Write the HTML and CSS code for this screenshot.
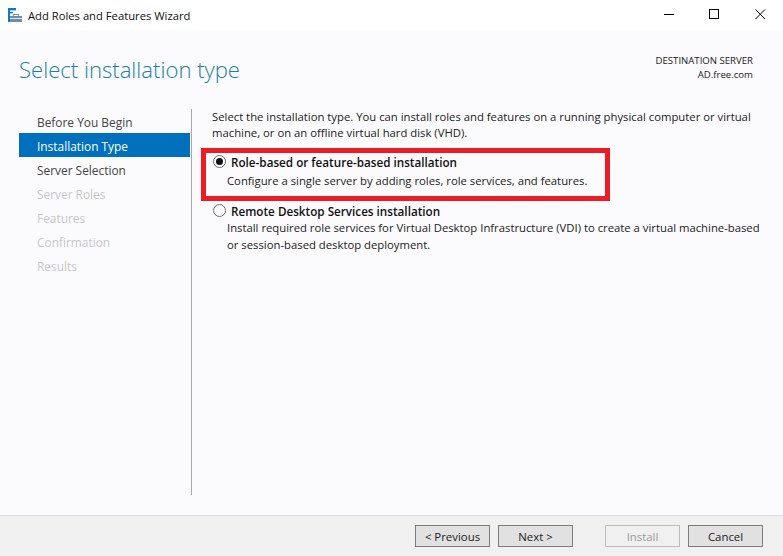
FILE: index.html
```html
<!DOCTYPE html>
<html lang="en">
<head>
<meta charset="utf-8">
<title>Add Roles and Features Wizard</title>
<link rel="stylesheet" href="styles.css">
</head>
<body>
<div class="window">
  <header class="titlebar">
    <svg class="app-icon" width="14" height="14" viewBox="0 0 14 14">
      <rect x="0" y="0" width="8" height="2.4" fill="#0f78c8"/>
      <rect x="0" y="0" width="2" height="14" fill="#0f78c8"/>
      <rect x="0" y="4" width="5" height="1.4" fill="#0f78c8"/>
      <rect x="5.5" y="6.5" width="5" height="2" fill="none" stroke="#6f8ea8" stroke-width="1"/>
      <rect x="2" y="8" width="12" height="6" fill="#6f8ea8"/>
      <rect x="2" y="10" width="12" height="1" fill="#dfe7ee"/>
    </svg>
    <span class="app-title">Add Roles and Features Wizard</span>
    <div class="win-controls">
      <svg width="11" height="11" viewBox="0 0 11 11"><path d="M1 5.5H11" stroke="#000" fill="none"/></svg>
      <svg width="11" height="11" viewBox="0 0 11 11"><rect x=".5" y=".5" width="9" height="9" stroke="#000" fill="none"/></svg>
      <svg width="11" height="11" viewBox="0 0 11 11"><path d="M.5 .5L10 10M10 .5L.5 10" stroke="#000" fill="none"/></svg>
    </div>
  </header>
  <div class="page-head">
    <h1 class="page-title">Select installation type</h1>
    <div class="dest">
      <div>DESTINATION SERVER</div>
      <div>AD.free.com</div>
    </div>
  </div>
  <main class="content">
    <nav class="steps">
      <div class="step">Before You Begin</div>
      <div class="step active">Installation Type</div>
      <div class="step">Server Selection</div>
      <div class="step off">Server Roles</div>
      <div class="step off">Features</div>
      <div class="step off">Confirmation</div>
      <div class="step off">Results</div>
    </nav>
    <section class="panel">
      <p class="intro">Select the installation type. You can install roles and features on a running physical computer or virtual machine, or on an offline virtual hard disk (VHD).</p>
      <div class="option first">
        <div class="opt-head"><span class="radio checked"></span><span class="opt-title">Role-based or feature-based installation</span></div>
        <p class="opt-desc">Configure a single server by adding roles, role services, and features.</p>
        <span class="highlight"></span>
      </div>
      <div class="option">
        <div class="opt-head"><span class="radio"></span><span class="opt-title">Remote Desktop Services installation</span></div>
        <p class="opt-desc">Install required role services for Virtual Desktop Infrastructure (VDI) to create a virtual machine-based or session-based desktop deployment.</p>
      </div>
    </section>
  </main>
  <footer class="footer">
    <button class="btn">&lt; Previous</button>
    <button class="btn next">Next &gt;</button>
    <button class="btn install" disabled>Install</button>
    <button class="btn cancel">Cancel</button>
  </footer>
</div>
</body>
</html>
```
FILE: styles.css
```css
* { box-sizing: border-box; }
html, body { margin: 0; padding: 0; }
body { font-family: "Open Sans", "Noto Sans", sans-serif; font-size: 11.3px; color: #1a1a1a; }
.window { width: 783px; height: 556px; display: flex; flex-direction: column; background: #fbfafd; overflow: hidden; }
.titlebar { height: 30px; flex: none; background: #fff; display: flex; align-items: center; padding-left: 8px; }
.app-icon { flex: none; margin-right: 6px; margin-top: -1px; }
.app-title { font-size: 11.24px; color: #111; }
.win-controls { margin-left: auto; display: flex; gap: 35px; padding: 0 17px 2px 0; align-items: center; }
.win-controls svg { display: block; }
.page-head { height: 69px; flex: none; display: flex; justify-content: space-between; padding: 0 30px 0 19px; }
.page-title { margin: 23px 0 0; font-size: 22.1px; line-height: 32px; font-weight: 300; color: #1a7fa8; }
.dest { margin-top: 24px; text-align: right; font-size: 9.6px; line-height: 13.5px; color: #222; }
.content { flex: 1; display: flex; min-height: 0; }
.steps { width: 171px; margin-left: 19px; margin-top: 10px; flex: none; }
.step { height: 24px; line-height: 22px; padding: 2px 0 0 18px; color: #444; font-size: 11.9px; }
.step.active { background: #0070bd; color: #fff; }
.step.off { color: #c8c8cc; }
.panel { margin-left: 1px; margin-top: 10px; margin-bottom: 20px; width: 580px; border-left: 1px solid #a8a8a8; padding: 0 8px 0 20px; }
.intro { margin: 0 0 12px; line-height: 16px; font-size: 11.3px; color: #222; }
.option { position: relative; }
.option.first { margin-bottom: 13px; }
.opt-head { display: flex; align-items: center; height: 17px; }
.radio { width: 13px; height: 13px; border: 1px solid #6a6a6a; border-radius: 50%; background: #fff; flex: none; margin: 0 5px 0 1px; position: relative; }
.radio.checked::after { content: ""; position: absolute; left: 2px; top: 2px; width: 7px; height: 7px; border-radius: 50%; background: #111; }
.opt-title { font-weight: 600; font-size: 11.7px; color: #111; }
.opt-desc { margin: 0 0 0 15px; line-height: 17px; font-size: 11.3px; color: #222; }
.first .opt-desc { margin-top: 2px; }
.highlight { position: absolute; left: -11px; top: -5px; width: 409px; height: 53px; border: 5px solid #ed1c24; pointer-events: none; }
.footer { height: 41px; flex: none; background: #f0f0f0; border-top: 1px solid #dedede; display: flex; align-items: center; padding: 0 20px 0 415px; }
.btn { width: 75px; height: 22px; padding: 1px 0 0; background: #e1e1e1; border: 1px solid #7a7a7a; font: inherit; font-size: 11.4px; color: #222; }
.btn.next { margin-left: 8px; }
.btn.install { margin-left: 32px; background: #f0f0f0; border-color: #bcbcbc; color: #9a9a9a; }
.btn.cancel { margin-left: 8px; }
```
